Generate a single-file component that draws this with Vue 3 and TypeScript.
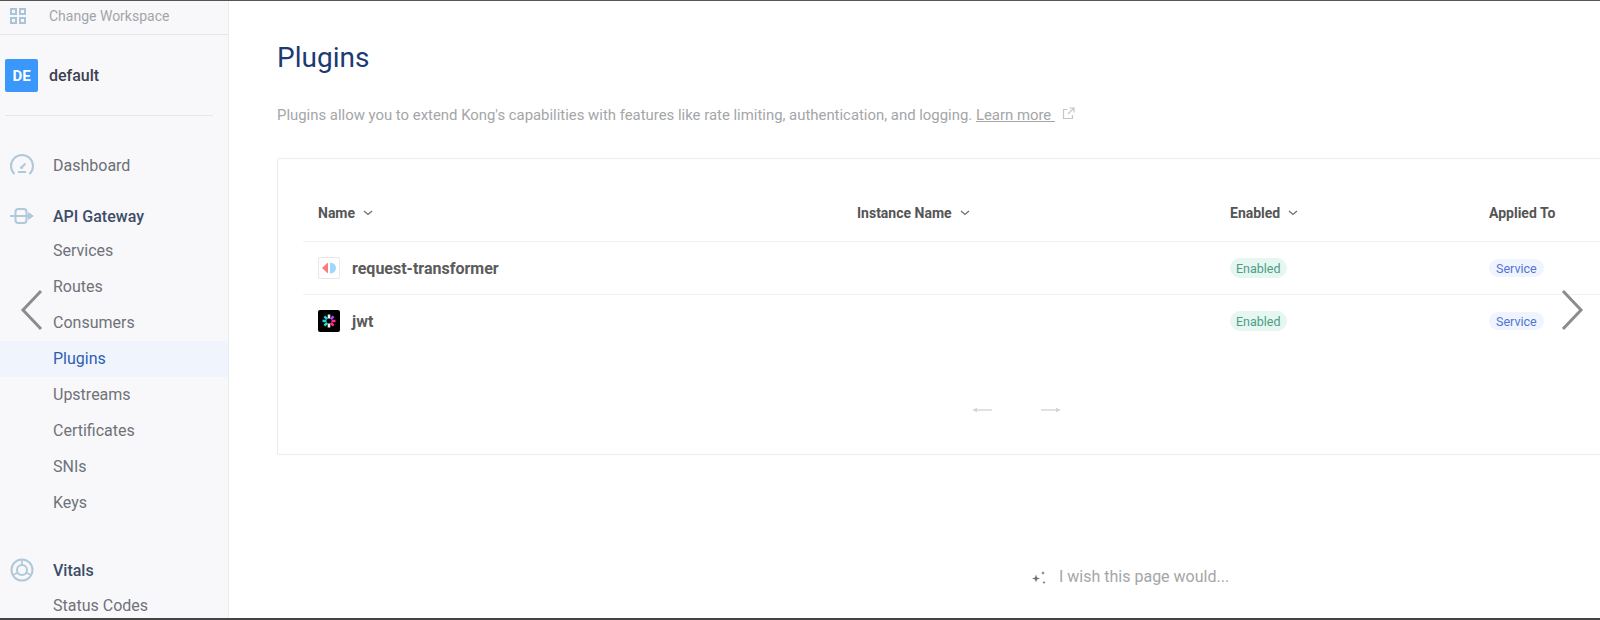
<template>
  <div class="page">
    <aside class="sidebar">
      <div class="change-ws">
        <svg class="ws-icon" width="18" height="18" viewBox="0 0 18 18" fill="none" stroke="#a9c4d8" stroke-width="2">
          <rect x="2" y="2" width="5" height="5" />
          <rect x="11" y="2" width="5" height="5" />
          <rect x="2" y="11" width="5" height="5" />
          <rect x="11" y="11" width="5" height="5" />
        </svg>
        <span>Change Workspace</span>
      </div>
      <div class="workspace">
        <div class="ws-badge">DE</div>
        <span class="ws-name">default</span>
      </div>
      <div class="side-divider"></div>
      <nav class="nav">
        <div class="nav-top dash">
          <svg class="nav-icon" width="26" height="24" viewBox="0 0 26 24" fill="none" stroke="#afc8da" stroke-width="2">
            <path d="M5.500 21A11 11 0 1 1 20.500 21" />
            <path d="M9 19h8" />
            <path d="M12 15l4.500-4.500" />
            <circle cx="12.500" cy="14.500" r="1.500" fill="#afc8da" stroke="none" />
          </svg>
          <span>Dashboard</span>
        </div>
        <div class="nav-top strong gateway">
          <svg class="nav-icon" width="26" height="18" viewBox="0 0 26 18" fill="none" stroke="#afc8da" stroke-width="2">
            <path d="M1 9h18" />
            <rect x="6.500" y="2" width="11" height="14" rx="3" />
            <path d="M19 5l6 4-6 4z" fill="#afc8da" stroke="none" />
          </svg>
          <span>API Gateway</span>
        </div>
        <div
          v-for="item in gatewayItems"
          :key="item"
          class="nav-sub"
          :class="{ active: item === 'Plugins' }"
        >
          {{ item }}
        </div>
        <div class="nav-top strong vitals">
          <svg class="nav-icon" width="26" height="24" viewBox="0 0 26 24" fill="none" stroke="#afc8da" stroke-width="2">
            <circle cx="13" cy="12" r="10.500" />
            <circle cx="13" cy="12" r="5" />
            <path d="M13 2v5M4 17l5-2.500M22 17l-5-2.500" stroke-width="1.600" />
          </svg>
          <span>Vitals</span>
        </div>
        <div class="nav-sub">Status Codes</div>
      </nav>
    </aside>

    <main class="content">
      <h1 class="title">Plugins</h1>
      <p class="desc">
        Plugins allow you to extend Kong's capabilities with features like rate limiting, authentication, and logging.
        <a class="learn">Learn more </a>
        <svg class="ext" width="13" height="13" viewBox="0 0 13 13" fill="none" stroke="#c4c6ca" stroke-width="1.200">
          <path d="M5.500 2.500H1.500v9H10.500V8" />
          <path d="M7.500 1h4.500v4.500M12 1L6 7" />
        </svg>
      </p>

      <section class="card">
        <div class="row head">
          <div v-for="col in columns" :key="col.label" class="cell">
            <span>{{ col.label }}</span>
            <svg v-if="col.sort" class="caret" width="10" height="6" viewBox="0 0 10 6" fill="none" stroke="#6f6f6f" stroke-width="1.300">
              <path d="M1 1l4 3.500L9 1" />
            </svg>
          </div>
        </div>
        <div v-for="plugin in plugins" :key="plugin.name" class="row body">
          <div class="cell name">
            <span class="logo" :class="plugin.logo">
              <svg v-if="plugin.logo === 'rt'" width="22" height="22" viewBox="0 0 22 22">
                <path d="M10 5.500v11L4 11z" fill="#ff7a80" />
                <path d="M12 5.500a6 5.500 0 0 1 0 11z" fill="#9fd8ff" />
              </svg>
              <svg v-else width="22" height="22" viewBox="0 0 22 22" stroke-width="2.600">
                <path d="M11 4.500v4M11 13.500v4" stroke="#eef6f6" />
                <path d="M15.600 6.400l-2.800 2.800" stroke="#a94bff" />
                <path d="M17.500 11h-4M15.600 15.600l-2.800-2.800" stroke="#ff2d8a" />
                <path d="M4.500 11h4M6.400 6.400l2.800 2.800" stroke="#19d3e6" />
                <path d="M6.400 15.600l2.800-2.800" stroke="#2fe0b0" />
              </svg>
            </span>
            <span>{{ plugin.name }}</span>
          </div>
          <div class="cell"></div>
          <div class="cell"><span class="pill green">Enabled</span></div>
          <div class="cell"><span class="pill blue">Service</span></div>
        </div>
        <div class="pager">
          <svg width="20" height="10" viewBox="0 0 20 10" fill="none" stroke="#d4d5da" stroke-width="1.400">
            <path d="M1 5h19" />
            <path d="M1 5l4-2.500v5z" fill="#d4d5da" stroke="none" />
          </svg>
          <svg width="20" height="10" viewBox="0 0 20 10" fill="none" stroke="#d4d5da" stroke-width="1.400">
            <path d="M0 5h19" />
            <path d="M19 5l-4-2.500v5z" fill="#d4d5da" stroke="none" />
          </svg>
        </div>
      </section>

      <div class="wish">
        <svg width="18" height="18" viewBox="0 0 18 18" fill="#707070">
          <path d="M5 6.500l1 3 3 1-3 1-1 3-1-3-3-1 3-1z" />
          <path d="M12 3l.6 1.400L14 5l-1.400.6L12 7l-.6-1.400L10 5l1.400-.6z" />
          <path d="M13 13l.5 1 1 .5-1 .5-.5 1-.5-1-1-.5 1-.5z" />
        </svg>
        <span>I wish this page would...</span>
      </div>
    </main>

    <svg class="carousel prev" width="24" height="42" viewBox="0 0 24 42" fill="none" stroke="#8c8c8c" stroke-width="3">
      <path d="M21 2L3 21l18 19" />
    </svg>
    <svg class="carousel next" width="24" height="42" viewBox="0 0 24 42" fill="none" stroke="#8c8c8c" stroke-width="3">
      <path d="M3 2l18 19L3 40" />
    </svg>
  </div>
</template>

<script setup lang="ts">
const gatewayItems: string[] = [
  'Services',
  'Routes',
  'Consumers',
  'Plugins',
  'Upstreams',
  'Certificates',
  'SNIs',
  'Keys'
]

const columns = [
  { label: 'Name', sort: true },
  { label: 'Instance Name', sort: true },
  { label: 'Enabled', sort: true },
  { label: 'Applied To', sort: false }
]

const plugins = [
  { name: 'request-transformer', logo: 'rt' },
  { name: 'jwt', logo: 'jwt' }
]
</script>

<style>
html,
body {
  margin: 0;
  height: 620px;
  overflow: hidden;
  background: #fff;
}
</style>

<style scoped>
.page {
  position: relative;
  display: flex;
  box-sizing: border-box;
  width: 1600px;
  height: 620px;
  overflow: hidden;
  border-top: 1px solid #555;
  border-bottom: 2px solid #444;
  font-family: Roboto, "Liberation Sans", sans-serif;
  color: #555;
}

.sidebar {
  flex: 0 0 229px;
  box-sizing: border-box;
  border-right: 1px solid #ebecef;
  background: #f8f8fb;
  overflow: hidden;
}

.change-ws {
  display: flex;
  align-items: center;
  height: 29px;
  padding-bottom: 4px;
  border-bottom: 1px solid #e6e7ea;
  font-size: 14px;
  color: #a3a5a8;
}

.ws-icon {
  margin: 0 22px 0 9px;
}

.workspace {
  display: flex;
  align-items: center;
  gap: 11px;
  margin: 24px 0 0 5px;
}

.ws-badge {
  display: flex;
  align-items: center;
  justify-content: center;
  width: 33px;
  height: 33px;
  border-radius: 2px;
  background: #3a97fb;
  color: #fff;
  font-size: 15px;
  font-weight: 700;
}

.ws-name {
  font-size: 16px;
  font-weight: 500;
  color: #3c4250;
}

.side-divider {
  width: 208px;
  height: 1px;
  margin: 23px 0 0 5px;
  background: #e6e7ea;
}

.nav {
  margin-top: 37px;
}

.nav-top {
  display: flex;
  align-items: center;
  height: 24px;
  padding-left: 9px;
  font-size: 16px;
  color: #6b6f76;
}

.nav-top.gateway {
  margin-top: 27px;
}

.nav-top.vitals {
  margin-top: 37px;
}

.nav-top.strong {
  font-weight: 500;
  color: #3d4d68;
}

.nav-icon {
  flex: none;
  margin-right: 18px;
}

.nav-sub {
  height: 36px;
  padding-left: 53px;
  line-height: 36px;
  font-size: 16px;
  color: #6f7277;
}

.gateway + .nav-sub {
  margin-top: 5px;
}

.vitals + .nav-sub {
  margin-top: 6px;
}

.nav-sub.active {
  margin-right: -1px;
  border-right: 1px solid #2f5db3;
  background: #f0f5fd;
  color: #2f5db3;
}

.content {
  flex: 1;
  min-width: 0;
  padding: 0 0 0 48px;
}

.title {
  margin: 40px 0 0;
  font-size: 28px;
  line-height: 34px;
  font-weight: 400;
  color: #1c3a73;
}

.desc {
  margin: 31px 0 0;
  font-size: 14.9px;
  line-height: 18px;
  white-space: nowrap;
  color: #a4a6a9;
}

.learn {
  text-decoration: underline;
  color: #a4a6a9;
}

.ext {
  margin-left: 7px;
}

.card {
  box-sizing: border-box;
  width: 1490px;
  height: 297px;
  margin-top: 34px;
  padding: 0 25px;
  border: 1px solid #ebecee;
  border-radius: 2px;
}

.row {
  display: grid;
  grid-template-columns: 539px 373px 259px 1fr;
  align-items: center;
}

.row.head {
  box-sizing: border-box;
  height: 82px;
  padding-top: 26px;
  font-size: 14px;
  font-weight: 700;
  color: #555;
}

.row.body {
  box-sizing: border-box;
  height: 53px;
  border-top: 1px solid #f2f2f4;
}

.cell {
  display: flex;
  align-items: center;
  padding-left: 15px;
}

.caret {
  margin-left: 8px;
}

.cell.name {
  gap: 12px;
  font-size: 16px;
  font-weight: 700;
  color: #5b5b5b;
}

.logo {
  display: flex;
  box-sizing: border-box;
  width: 22px;
  height: 22px;
  border-radius: 2px;
}

.logo.rt {
  background: #fff;
  box-shadow: inset 0 0 0 1px #e6e6e6;
}

.logo.jwt {
  background: #000;
}

.pill {
  border-radius: 10px;
  font-size: 12.500px;
  line-height: 15px;
}

.pill.green {
  padding: 2.500px 6px;
  background: #e6f6f1;
  color: #4c9d84;
}

.pill.blue {
  padding: 1.500px 7px;
  background: #f0f4fe;
  color: #4f75d6;
}

.pager {
  display: flex;
  justify-content: center;
  gap: 49px;
  margin-top: 58px;
  padding-right: 12px;
}

.wish {
  display: flex;
  align-items: center;
  gap: 10px;
  margin: 112px 0 0 754px;
  font-size: 16px;
  color: #a4a6a9;
}

/* slider arrows sit over the page */
.carousel {
  position: absolute;
  top: 288px;
}

.prev {
  left: 20px;
}

.next {
  right: 16px;
}
</style>
